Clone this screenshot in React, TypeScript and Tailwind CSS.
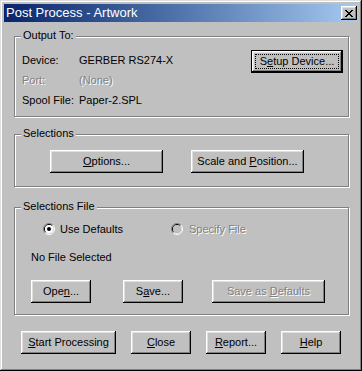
import type { ReactNode } from "react";

const BEVEL =
  "shadow-[inset_-1px_-1px_0_#000,inset_1px_1px_0_#fff,inset_-2px_-2px_0_#808080,inset_2px_2px_0_#dfdfdf]";

function Btn({
  children,
  w,
  def,
  disabled,
}: {
  children: ReactNode;
  w: string;
  def?: boolean;
  disabled?: boolean;
}) {
  return (
    <div
      className={`${w} h-[23px] shrink-0 bg-[#c0c0c0] flex items-center justify-center text-[11px] leading-[13px] relative ${
        def ? "border border-black" : ""
      } ${BEVEL} ${disabled ? "text-[#808080] [text-shadow:1px_1px_0_#fff]" : "text-black"}`}
    >
      {def && <div className="absolute inset-[3px] border border-dotted border-black" />}
      <span>{children}</span>
    </div>
  );
}

function Group({ label, h, className, children }: { label: string; h: string; className?: string; children: ReactNode }) {
  return (
    <div
      className={`relative w-[335px] ${h} border border-[#808080] shadow-[inset_1px_1px_0_#fff,1px_1px_0_#fff] ${className ?? ""}`}
    >
      <span className="absolute left-[6px] -top-[8px] px-[2px] bg-[#c0c0c0] text-[11px] leading-[13px]">{label}</span>
      {children}
    </div>
  );
}

function Radio({ checked, disabled }: { checked?: boolean; disabled?: boolean }) {
  return (
    <svg width="12" height="12" viewBox="0 0 12 12" className="shrink-0">
      <path d="M2.1 9.9 A5.5 5.5 0 0 1 9.9 2.1" fill="none" stroke="#808080" />
      <path d="M9.9 2.1 A5.5 5.5 0 0 1 2.1 9.9" fill="none" stroke="#fff" />
      <path d="M2.8 9.2 A4.5 4.5 0 0 1 9.2 2.8" fill="none" stroke="#000" />
      <path d="M9.2 2.8 A4.5 4.5 0 0 1 2.8 9.2" fill="none" stroke="#dfdfdf" />
      <circle cx="6" cy="6" r="4" fill={disabled ? "#c0c0c0" : "#fff"} />
      {checked && <circle cx="6" cy="6" r="2" fill="#000" />}
    </svg>
  );
}

const DIS = "text-[#808080] [text-shadow:1px_1px_0_#fff]";

export default function App() {
  return (
    <div className="w-[362px] h-[371px] bg-[#c0c0c0] p-[3px] font-['Liberation_Sans',Arial,sans-serif] text-black shadow-[inset_-1px_-1px_0_#000,inset_1px_1px_0_#dfdfdf,inset_-2px_-2px_0_#808080,inset_2px_2px_0_#fff]">
      {/* title bar */}
      <div className="h-[18px] mt-[1px] ml-[1px] mr-[1px] flex items-center bg-gradient-to-r from-[#0a246a] to-[#a6caf0] pl-[2px] pr-[1px]">
        <span className="flex-1 text-white text-[13px] leading-[16px]">Post Process - Artwork</span>
        <div className={`w-[16px] h-[14px] bg-[#c0c0c0] flex items-center justify-center ${BEVEL}`}>
          <svg width="8" height="7" viewBox="0 0 8 7">
            <path d="M0 0h2v1h-2zM6 0h2v1h-2zM1 1h2v1h-2zM5 1h2v1h-2zM2 2h4v1h-4zM3 3h2v1h-2zM2 4h4v1h-4zM1 5h2v1h-2zM5 5h2v1h-2zM0 6h2v1h-2zM6 6h2v1h-2z" fill="#000" />
          </svg>
        </div>
      </div>

      <div className="pl-[11px] flex flex-col">
        <Group label="Output To:" h="h-[81px]" className="mt-[14px]">
          <div className="flex">
            <div className="flex-1 pt-[13px] pl-[7px] text-[11px]">
              <div className="h-[20px] flex items-center">
                <span className="w-[57px]">Device:</span>
                <span>GERBER RS274-X</span>
              </div>
              <div className={`h-[20px] flex items-center ${DIS}`}>
                <span className="w-[57px]">Port:</span>
                <span>(None)</span>
              </div>
              <div className="h-[20px] flex items-center">
                <span className="w-[57px]">Spool File:</span>
                <span>Paper-2.SPL</span>
              </div>
            </div>
            <div className="mt-[13px] mr-[5px]">
              <Btn w="w-[92px]" def>
                S<u>e</u>tup Device...
              </Btn>
            </div>
          </div>
        </Group>

        <Group label="Selections" h="h-[53px]" className="mt-[17px]">
          <div className="flex pl-[35px] pt-[15px] gap-[28px]">
            <Btn w="w-[113px]">
              <u>O</u>ptions...
            </Btn>
            <Btn w="w-[113px]">
              Scale and <u>P</u>osition...
            </Btn>
          </div>
        </Group>

        <Group label="Selections File" h="h-[108px]" className="mt-[20px]">
          <div className="flex flex-col text-[11px] leading-[14px]">
            <div className="flex items-center mt-[14px] pl-[28px]">
              <div className="w-[128px] flex items-center gap-[5px]">
                <Radio checked />
                <span>Use Defaults</span>
              </div>
              <div className="flex items-center gap-[6px]">
                <Radio disabled />
                <span className={DIS}>Specify File</span>
              </div>
            </div>
            <div className="mt-[14px] pl-[16px]">No File Selected</div>
            <div className="flex mt-[16px] pl-[16px]">
              <Btn w="w-[60px]">
                Ope<u>n</u>...
              </Btn>
              <div className="ml-[32px]">
                <Btn w="w-[60px]">
                  S<u>a</u>ve...
                </Btn>
              </div>
              <div className="ml-[29px]">
                <Btn w="w-[113px]" disabled>
                  Save as <u>D</u>efaults
                </Btn>
              </div>
            </div>
          </div>
        </Group>

        <div className="flex mt-[16px] pl-[7px] gap-[15px]">
          <Btn w="w-[95px]">
            <u>S</u>tart Processing
          </Btn>
          <Btn w="w-[60px]">
            <u>C</u>lose
          </Btn>
          <Btn w="w-[60px]">
            <u>R</u>eport...
          </Btn>
          <Btn w="w-[60px]">
            <u>H</u>elp
          </Btn>
        </div>
      </div>
    </div>
  );
}
